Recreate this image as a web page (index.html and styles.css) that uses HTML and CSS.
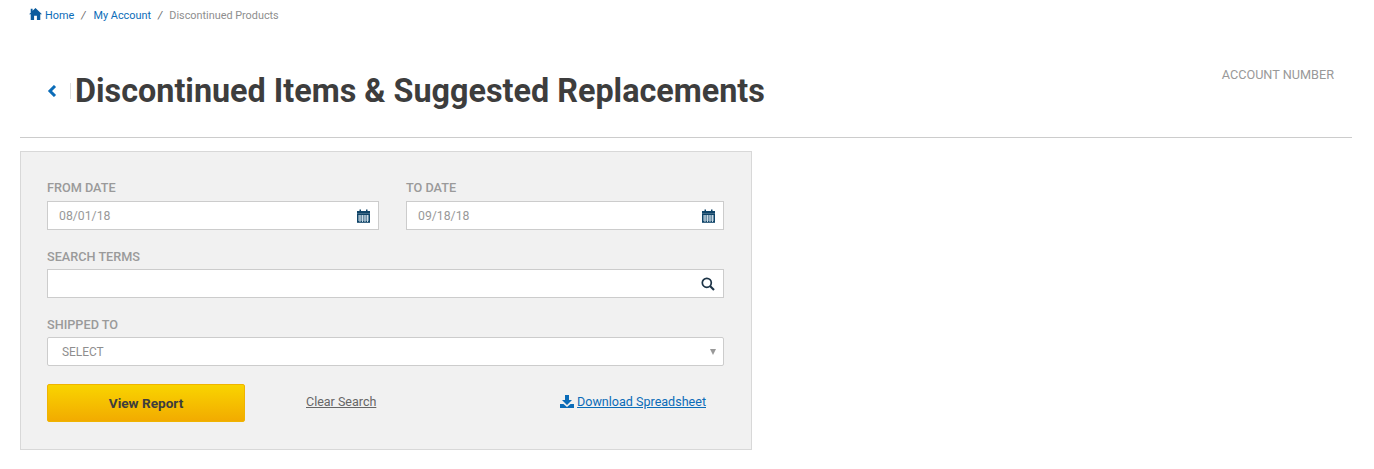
FILE: index.html
```html
<!DOCTYPE html>
<html lang="en">
<head>
    <meta charset="UTF-8">
    <title>Discontinued Products</title>
    <link rel="stylesheet" href="styles.css">
</head>
<body>

<!-- Breadcrumb -->
<nav class="breadcrumb">
    <svg class="home-icon" viewBox="0 0 24 22" width="13" height="12"><path d="M12 0 L24 11.5 L20.8 11.5 L20.8 22 L14.6 22 L14.6 14 L9.4 14 L9.4 22 L3.2 22 L3.2 11.5 L0 11.5 L3.2 8.5 L3.2 1.5 L6.6 1.5 L6.6 5.200 Z"/></svg>
    <a href="#">Home</a>
    <span class="sep">/</span>
    <a href="#">My Account</a>
    <span class="sep">/</span>
    <span class="current">Discontinued Products</span>
</nav>

<!-- Page title -->
<header class="page-header">
    <div class="title-group">
        <a href="#" class="back-link">
            <svg viewBox="0 0 10 12" width="10" height="12"><path d="M8 1 L3 6 L8 11" fill="none" stroke="#0b6cb8" stroke-width="3"/></svg>
        </a>
        <h1>Discontinued Items &amp; Suggested Replacements</h1>
    </div>
    <div class="account-number">ACCOUNT NUMBER</div>
</header>

<!-- Report filters -->
<form class="filter-panel">
    <div class="row-dates">
        <div class="field">
            <label>FROM DATE</label>
            <div class="input-box">
                <span class="value">08/01/18</span>
                <svg class="calendar-icon" viewBox="0 0 13 14" width="13" height="14"><path fill="#0f4468" d="M0 2h2.5V0.5h1.5V2h5V0.5h1.5V2H13v2.8H0z"/><rect y="4.8" width="13" height="9" fill="#0f4468"/><path stroke="#c9d9e4" stroke-width="1" d="M1 7h11M1 9h11M1 11h11M3 6v7M5.500 6v7M8 6v7M10.500 6v7"/></svg>
            </div>
        </div>
        <div class="field">
            <label>TO DATE</label>
            <div class="input-box">
                <span class="value">09/18/18</span>
                <svg class="calendar-icon" viewBox="0 0 13 14" width="13" height="14"><path fill="#0f4468" d="M0 2h2.5V0.5h1.5V2h5V0.5h1.5V2H13v2.8H0z"/><rect y="4.8" width="13" height="9" fill="#0f4468"/><path stroke="#c9d9e4" stroke-width="1" d="M1 7h11M1 9h11M1 11h11M3 6v7M5.500 6v7M8 6v7M10.500 6v7"/></svg>
            </div>
        </div>
    </div>

    <div class="field">
        <label>SEARCH TERMS</label>
        <div class="input-box">
            <span class="value"></span>
            <svg class="search-icon" viewBox="0 0 14 14" width="14" height="14"><circle cx="5.800" cy="5.800" r="4.500" fill="none" stroke="#1c3346" stroke-width="1.700"/><path d="M9 9 L13 13" stroke="#1c3346" stroke-width="2.200"/></svg>
        </div>
    </div>

    <div class="field field-last">
        <label>SHIPPED TO</label>
        <div class="input-box select-box">
            <span class="select-text">SELECT</span>
            <span class="select-arrow"></span>
        </div>
    </div>

    <div class="actions">
        <button type="button" class="btn-report">View Report</button>
        <a href="#" class="clear-link">Clear Search</a>
        <a href="#" class="download-link">
            <svg viewBox="0 0 14 13" width="14" height="13"><path fill="#0b6cb8" d="M5 0h4v5h3L7 10 2 5h3z"/><path fill="#0b6cb8" d="M0 9h3.500L7 12l3.500-3H14v4H0z"/></svg>
            Download Spreadsheet</a>
    </div>
</form>

</body>
</html>
```

FILE: styles.css
```css
/* General */
body {
    font-family: Roboto, Arial, sans-serif;
    background-color: #fff;
    color: #3d3d3d;
    margin: 0;
    padding: 0 22px 0 20px;
}

a {
    color: #0b6cb8;
    text-decoration: none;
}

/* Breadcrumb */
.breadcrumb {
    display: flex;
    align-items: center;
    height: 30px;
    padding-left: 9px;
    font-size: 10.850px;
}

.home-icon {
    fill: #0b5c9e;
    margin-right: 3px;
    margin-bottom: 2px;
}

.sep {
    color: #666;
    margin: 0 8px 0 7px;
    font-style: italic;
}

.sep:nth-of-type(2) {
    margin-right: 7px;
}

.current {
    color: #8e8e8e;
}

/* Page title */
.page-header {
    display: flex;
    justify-content: space-between;
    align-items: flex-start;
    height: 107px;
    border-bottom: 1px solid #ccc;
    box-sizing: content-box;
}

.title-group {
    display: flex;
    align-items: center;
    margin-top: 40px;
    padding-left: 27px;
}

.back-link {
    display: flex;
    width: 24px;
    height: 16px;
    margin-right: 4px;
    align-items: center;
    border-right: 1px solid #ddd;
    box-sizing: border-box;
}

h1 {
    margin: 0;
    font-size: 32.330px;
    line-height: 42px;
    font-weight: 700;
    color: #3d3d3d;
}

.account-number {
    font-size: 12.700px;
    color: #999;
    margin-top: 37px;
    margin-right: 18px;
}

/* Filter panel */
.filter-panel {
    width: 732px;
    height: 299px;
    margin-top: 13px;
    padding: 29px 26px 0;
    background-color: #f1f1f1;
    border: 1px solid #d8d8d8;
    box-sizing: border-box;
}

.row-dates {
    display: flex;
    gap: 27px;
    width: 677px;
}

.row-dates .field {
    flex: 0 0 332px;
}

.row-dates .field + .field {
    flex: 0 0 318px;
}

.row-dates label {
    margin-bottom: 6px;
}

.field {
    width: 677px;
    margin-bottom: 20px;
}

.field-last {
    margin-bottom: 18px;
}

label {
    display: block;
    font-size: 12.700px;
    line-height: 14px;
    font-weight: 500;
    color: #9a9a9a;
    margin-bottom: 5px;
}

.input-box {
    display: flex;
    align-items: center;
    justify-content: space-between;
    height: 29px;
    padding: 0 8px 0 11px;
    background-color: #fff;
    border: 1px solid #ccc;
    box-sizing: border-box;
}

.value {
    font-size: 12.250px;
    color: #999;
}

.select-box {
    border-radius: 2px;
    padding: 0 7px 0 14px;
}

.select-text {
    font-size: 11.900px;
    color: #8e8e8e;
}

.select-arrow {
    width: 0;
    height: 0;
    border-left: 3px solid transparent;
    border-right: 3px solid transparent;
    border-top: 6px solid #999;
}

/* Buttons and links */
.actions {
    display: flex;
    align-items: flex-start;
    width: 659px;
}

.btn-report {
    width: 198px;
    height: 38px;
    font-family: Roboto, Arial, sans-serif;
    font-size: 13.600px;
    font-weight: 700;
    color: #3d3d3d;
    background: linear-gradient(#f9d400, #f2ab00);
    border: 1px solid #f0b400;
    border-radius: 2px;
}

.clear-link {
    margin-left: 61px;
    margin-top: 10px;
    font-size: 12.500px;
    color: #666;
    text-decoration: underline;
}

.download-link {
    display: flex;
    align-items: center;
    gap: 3px;
    margin-left: auto;
    margin-top: 10px;
    font-size: 12.550px;
    text-decoration: underline;
}
```
